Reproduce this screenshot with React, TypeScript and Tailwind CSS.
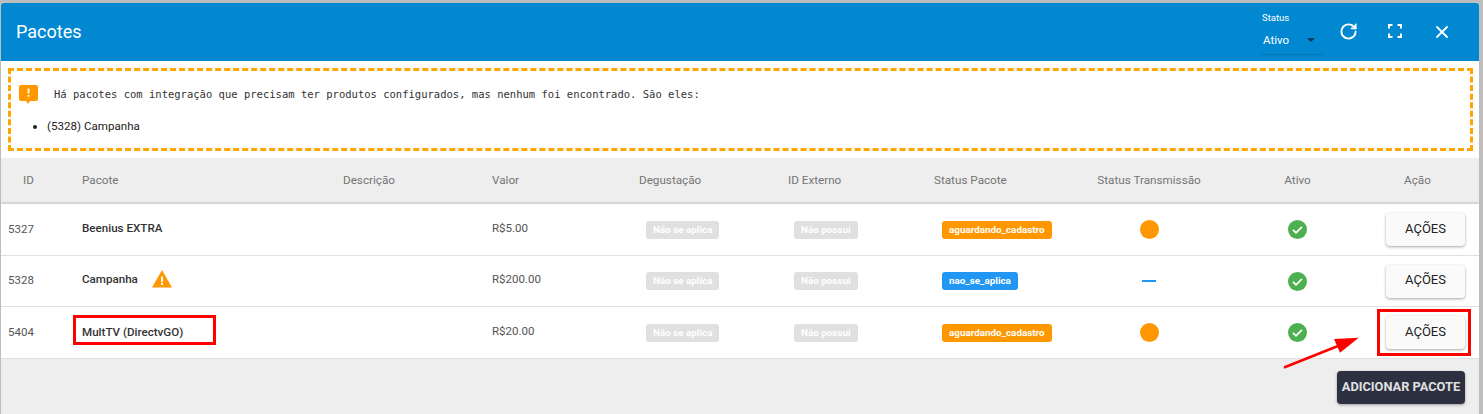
import { RotateCw, X } from "lucide-react";

const colunas = "grid grid-cols-[81px_261px_149px_147px_149px_146px_140px_150px_147px_108px]";

interface Pacote {
  id: string;
  nome: string;
  valor: string;
  status: string;
  aviso?: boolean;
  marcado?: boolean;
}

const pacotes: Pacote[] = [
  { id: "5327", nome: "Beenius EXTRA", valor: "R$5.00", status: "aguardando_cadastro" },
  { id: "5328", nome: "Campanha", valor: "R$200.00", status: "nao_se_aplica", aviso: true },
  { id: "5404", nome: "MultTV (DirectvGO)", valor: "R$20.00", status: "aguardando_cadastro", marcado: true },
];

function Etiqueta({ texto, cor }: { texto: string; cor: string }) {
  return (
    <span className={`inline-block h-[18px] rounded-[3px] px-[7px] text-[9.85px] font-bold leading-[18px] text-white ${cor}`}>
      {texto}
    </span>
  );
}

function Check() {
  return (
    <svg width="19" height="19" viewBox="0 0 19 19">
      <circle cx="9.5" cy="9.5" r="9.5" fill="#4caf50" />
      <path d="M5 9.8l3 3 6-6" fill="none" stroke="#fff" strokeWidth="1.8" />
    </svg>
  );
}

function Aviso() {
  return (
    <svg width="20" height="18" viewBox="0 0 20 18" className="-mt-[3px] -ml-[1px]">
      <path d="M10 0L20 17.5H0z" fill="#ff9800" />
      <path d="M9 6.5h2v5.5H9zM9 13h2v2H9z" fill="#fff" />
    </svg>
  );
}

function Linha({ p }: { p: Pacote }) {
  const marcado = p.marcado;
  return (
    <div className={`${colunas} ${p.aviso ? "h-[51px]" : "h-[52px]"} items-center border-b border-[#e0e0e0] bg-white text-[11.5px]`}>
      <div className="pl-[7px] text-[#555]">{p.id}</div>
      <div className="relative flex items-center gap-[15px] text-[11.6px] font-medium text-[#333]">
        <span className={marcado ? "" : "-mt-[2px]"}>{p.nome}</span>
        {p.aviso && <Aviso />}
        {marcado && <div className="absolute -top-[9px] -left-[9px] h-[30px] w-[143px] border-[3px] border-[#f00]" />}
      </div>
      <div />
      <div className="-mt-[2px] text-[#555]">{p.valor}</div>
      <div className="pl-[7px]"><Etiqueta texto="Não se aplica" cor="bg-[#e0e0e0]" /></div>
      <div className="pl-[6px]"><Etiqueta texto="Não possui" cor="bg-[#e0e0e0]" /></div>
      <div className="pl-[8px]">
        <Etiqueta texto={p.status} cor={p.aviso ? "bg-[#2196f3]" : "bg-[#ff9800]"} />
      </div>
      <div className="flex justify-center">
        {p.aviso ? (
          <div className="h-[2px] w-[14px] bg-[#2196f3]" />
        ) : (
          <div className="h-[19px] w-[19px] rounded-full bg-[#ff9800]" />
        )}
      </div>
      <div className="flex justify-center"><Check /></div>
      <div className="relative pl-[15px]">
        <button className="h-[33px] w-[79px] rounded-[4px] bg-[#fafafa] pb-[2px] text-[13px] text-[#222] shadow-[0_1px_3px_rgba(0,0,0,0.35)]">
          AÇÕES
        </button>
        {marcado && <div className="absolute -top-[7px] left-[6px] h-[47px] w-[94px] border-[3px] border-[#f00]" />}
      </div>
    </div>
  );
}

export default function App() {
  const cabecalho = ["ID", "Pacote", "Descrição", "Valor", "Degustação", "ID Externo", "Status Pacote"];
  return (
    <div className="h-[414px] w-[1483px] overflow-hidden bg-[#bdbdbd] pt-[3px] font-['Roboto',sans-serif]">
      <div className="relative ml-[1px] h-[411px] w-[1478px] overflow-hidden rounded-t-[3px] bg-[#eeeeee]">
        {/* Topo */}
        <div className="flex h-[58px] items-center justify-between bg-[#0288d1] pl-[15px] pr-[28px] text-white">
          <h1 className="text-[18px] leading-none">Pacotes</h1>
          <div className="flex items-center">
            <div className="mr-[16px] mt-[4px] w-[62px] border-b border-[#0277b5] pb-[5px] text-[9.5px]">
              <div className="ml-[1px] -mt-[2px] mb-[6px]">Status</div>
              <div className="flex items-center justify-between pl-[2px] pr-[8px] text-[11.5px]">
                <span>Ativo</span>
                <span className="h-0 w-0 border-x-[4px] border-t-[4px] border-x-transparent border-t-[#0d3c61]" />
              </div>
            </div>
            <RotateCw size={19} strokeWidth={2.4} className="mr-[30px] -mt-[2px]" />
            <svg width="14" height="14" viewBox="0 0 14 14" className="mr-[30px] -mt-[2px]" fill="none" stroke="#fff" strokeWidth="2">
              <path d="M1 4.5V1h3.5M9.5 1H13v3.5M13 9.5V13H9.5M4.5 13H1V9.5" />
            </svg>
            <X size={20} strokeWidth={2.2} className="-mr-[1px] -mt-[1px]" />
          </div>
        </div>

        {/* Aviso */}
        <div className="h-[97px] bg-white px-[7px] pt-[7px]">
          <div className="h-[83px] w-[1465px] border-[3px] border-dashed border-[#ffa500] pl-[8px] pt-[14px]">
            <div className="flex items-center">
              <svg width="19" height="19" viewBox="0 0 19 19">
                <path d="M2 0h15a2 2 0 012 2v12a2 2 0 01-2 2h-6l-2 3-2-3H2a2 2 0 01-2-2V2a2 2 0 012-2z" fill="#ff9800" />
                <path d="M8.6 3.5h1.8v5H8.6zM8.6 10h1.8v1.8H8.6z" fill="#fff" />
              </svg>
              <span className="ml-[16px] mt-[1px] font-['DejaVu_Sans_Mono',monospace] text-[10.52px] text-[#333]">
                Há pacotes com integração que precisam ter produtos configurados, mas nenhum foi encontrado. São eles:
              </span>
            </div>
            <ul className="mt-[15px] list-disc pl-[28px] text-[11.6px] leading-[14px] text-[#222]">
              <li>(5328) Campanha</li>
            </ul>
          </div>
        </div>

        {/* Tabela */}
        <div className={`${colunas} h-[46px] items-center border-b-[2px] border-[#d6d6d6] bg-[#eeeeee] pt-[2px] text-[11.7px] text-[#757575]`}>
          {cabecalho.map((c, i) => (
            <div key={c} className={i === 0 ? "pl-[22px]" : ""}>{c}</div>
          ))}
          <div className="-ml-[25px] w-[200px] text-center">Status Transmissão</div>
          <div className="text-center">Ativo</div>
          <div className="pr-[15px] text-center">Ação</div>
        </div>
        {pacotes.map((p) => (
          <Linha key={p.id} p={p} />
        ))}

        <div className="flex justify-end pr-[14px] pt-[12px]">
          <button className="h-[33px] w-[128px] rounded-[4px] bg-[#2d3040] pb-[2px] text-[12.8px] font-bold text-[#e0e0e0] shadow-[0_1px_3px_rgba(0,0,0,0.35)]">
            ADICIONAR PACOTE
          </button>
        </div>

        {/* Seta da anotação */}
        <svg className="absolute left-[1282px] top-[330px]" width="80" height="40" viewBox="0 0 80 40">
          <path d="M1 34.5L55 13" stroke="#f00" strokeWidth="2.5" />
          <path d="M75.7 4.7L51 6l6 13.7z" fill="#f00" />
        </svg>
      </div>
    </div>
  );
}
